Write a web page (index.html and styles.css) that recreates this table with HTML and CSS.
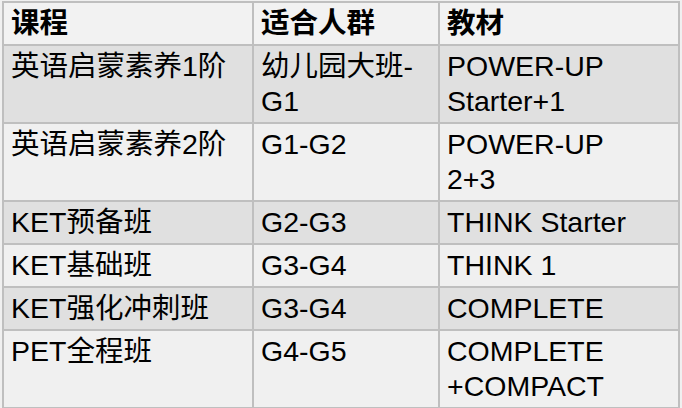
FILE: index.html
```html
<!DOCTYPE html>
<html lang="zh">
<head>
<meta charset="utf-8">
<title>课程</title>
<link rel="stylesheet" href="styles.css">
</head>
<body>
<table class="courses">
  <colgroup>
    <col class="c1">
    <col class="c2">
    <col class="c3">
  </colgroup>
  <thead>
    <tr class="head">
      <th>课程</th>
      <th>适合人群</th>
      <th>教材</th>
    </tr>
  </thead>
  <tbody>
    <tr class="dark">
      <td>英语启蒙素养1阶</td>
      <td>幼儿园大班-<br>G1</td>
      <td>POWER-UP<br>Starter+1</td>
    </tr>
    <tr class="light">
      <td>英语启蒙素养2阶</td>
      <td>G1-G2</td>
      <td>POWER-UP<br>2+3</td>
    </tr>
    <tr class="dark">
      <td>KET预备班</td>
      <td>G2-G3</td>
      <td>THINK Starter</td>
    </tr>
    <tr class="light">
      <td>KET基础班</td>
      <td>G3-G4</td>
      <td>THINK 1</td>
    </tr>
    <tr class="dark">
      <td>KET强化冲刺班</td>
      <td>G3-G4</td>
      <td>COMPLETE</td>
    </tr>
    <tr class="light">
      <td>PET全程班</td>
      <td>G4-G5</td>
      <td>COMPLETE<br>+COMPACT</td>
    </tr>
  </tbody>
</table>
</body>
</html>
```
FILE: styles.css
```css
html, body {
  background: #f0f0f0;
}
body {
  margin: 1px 0 0 2px;
  font-family: "Liberation Sans", "Noto Sans CJK SC", sans-serif;
  font-size: 28.5px;
  line-height: 35px;
  color: #000;
}
.courses {
  border-collapse: separate;
  border-spacing: 0;
  table-layout: fixed;
  width: 678px;
  border-top: 2px solid #bfbfbf;
  border-left: 2px solid #bfbfbf;
}
.c1 { width: 250px; }
.c2 { width: 186px; }
.c3 { width: 240px; }
.courses th,
.courses td {
  padding: 3px 8px 3px 7px;
  text-align: left;
  vertical-align: top;
  border-right: 2px solid #bfbfbf;
  border-bottom: 2px solid #bfbfbf;
  white-space: nowrap;
  overflow: hidden;
}
.courses th {
  font-weight: bold;
}
.head { background: #f2f2f2; }
.dark { background: #e0e0e0; }
.light { background: #f0f0f0; }
```
